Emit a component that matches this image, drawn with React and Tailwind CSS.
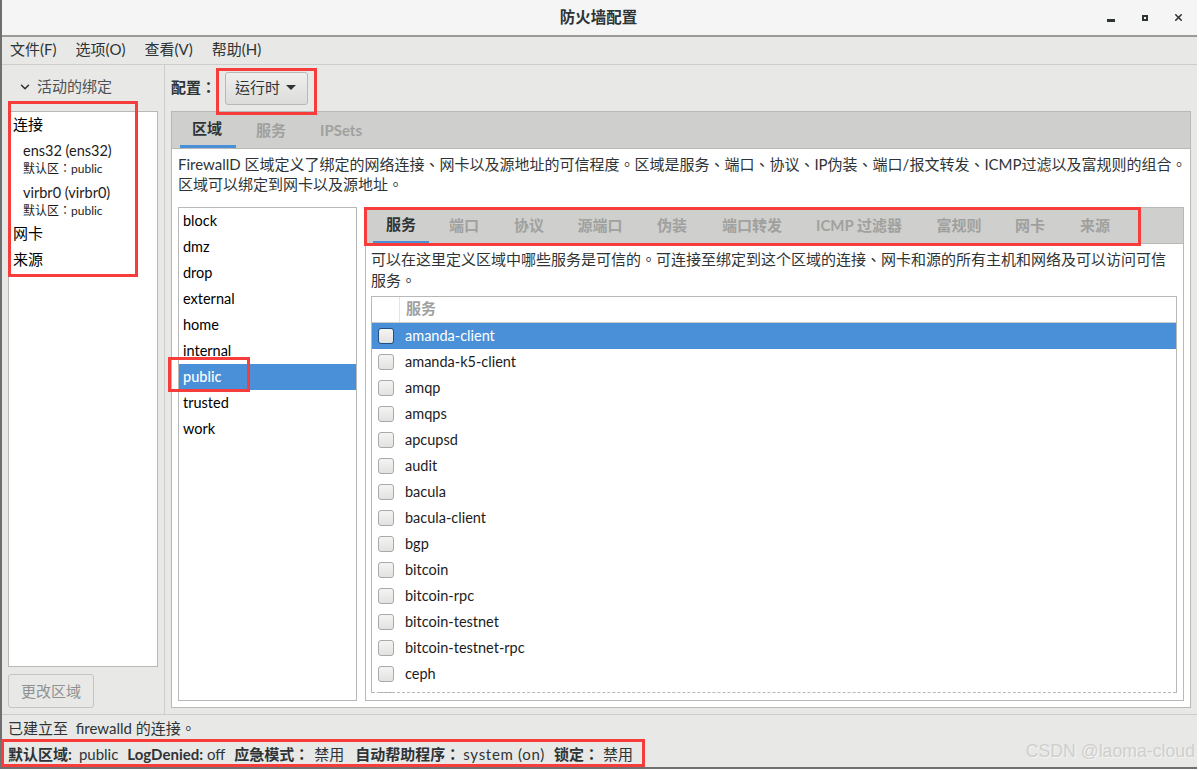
import React from "react";
import { ChevronDown, X } from "lucide-react";

const font = "font-['Lato','Noto_Sans_CJK_TC',sans-serif]";
const zones = ["block", "dmz", "drop", "external", "home", "internal", "public", "trusted", "work"];
const subTabs = [
  ["服务", "w-[56px]"],
  ["端口", "w-[70px]"],
  ["协议", "w-[60px]"],
  ["源端口", "w-[82px]"],
  ["伪装", "w-[62px]"],
  ["端口转发", "w-[98px]"],
  ["ICMP 过滤器", "w-[116px]"],
  ["富规则", "w-[84px]"],
  ["网卡", "w-[58px]"],
  ["来源", "w-[72px]"],
];
const services = [
  "amanda-client",
  "amanda-k5-client",
  "amqp",
  "amqps",
  "apcupsd",
  "audit",
  "bacula",
  "bacula-client",
  "bgp",
  "bitcoin",
  "bitcoin-rpc",
  "bitcoin-testnet",
  "bitcoin-testnet-rpc",
  "ceph",
  "",
];

const RedBox = ({ className }) => (
  <div className={`absolute border-[3px] border-[#f73c3c] pointer-events-none ${className}`} />
);

const App = () => {
  return (
    <div className={`relative w-[1199px] h-[770px] overflow-hidden bg-white text-[15px] text-[#2e3436] ${font}`}>
      <div className="w-[1197px] h-[769px] flex flex-col bg-[#e8e8e7] border-l-2 border-b-2 border-[#6f6f6f]">
        {/* title bar */}
        <div className="relative h-[37px] shrink-0 flex items-center justify-center pr-[2px] bg-[#f5f5f5] border-b-2 border-[#9a9a97] font-bold text-[15.5px] text-[#2e3436]">
          防火墙配置
          <div className="absolute top-0 right-0 h-full">
            <span className="absolute right-[82px] top-[19px] w-[8px] h-[3px] bg-[#2e3436]" />
            <span className="absolute right-[49px] top-[15px] w-[6px] h-[6px] border-2 border-[#2e3436]" />
            <X size={11} strokeWidth={3.4} className="absolute right-[13px] top-[12px]" />
          </div>
        </div>

        {/* menu */}
        <div className="h-[28px] shrink-0 flex items-center gap-[19px] pl-[8px] pb-[2px] border-b border-[#cdcdcb]">
          <span>文件(F)</span>
          <span>选项(O)</span>
          <span>查看(V)</span>
          <span>帮助(H)</span>
        </div>

        <div className="flex-1 flex min-h-0">
          {/* left panel */}
          <div className="w-[163px] shrink-0 flex flex-col border-r border-[#cdcdcb] pl-[6px] pr-[6px] pb-[6px]">
            <div className="h-[46px] shrink-0 flex items-center pl-[10px] pb-[3px] gap-[5px] text-[#4d5254]">
              <ChevronDown size={14} strokeWidth={2.6} className="text-[#2e3436]" />
              <span>活动的绑定</span>
            </div>
            <div className="flex-1 bg-white border border-[#b8b8b6] text-black pl-[4px]">
              <div className="h-[24px] flex items-center">连接</div>
              <div className="pl-[10px] text-[#1c1c1c]">
                <div className="h-[24px] flex items-center mt-[3px] text-[14.5px]">ens32 (ens32)</div>
                <div className="h-[12px] flex items-center text-[12px]">默认区：public</div>
                <div className="h-[24px] flex items-center mt-[6px] text-[14.5px]">virbr0 (virbr0)</div>
                <div className="h-[12px] flex items-center text-[12px]">默认区：public</div>
              </div>
              <div className="h-[26px] flex items-center mt-[3px]">网卡</div>
              <div className="h-[26px] flex items-center">来源</div>
            </div>
            <button className="mt-[7px] w-[86px] h-[34px] shrink-0 rounded-[3px] border border-[#c4c4c2] bg-[#e8e8e7] text-[#8f9292]">
              更改区域
            </button>
          </div>

          {/* right panel */}
          <div className="flex-1 min-w-0 flex flex-col pl-[6px] pr-[6px] pb-[6px]">
            <div className="h-[46px] shrink-0 flex items-center gap-[9px]">
              <span className="font-bold pb-[2px]">配置：</span>
              <button className="w-[83px] h-[33px] flex items-center justify-center gap-[6px] pr-[2px] pb-[1px] rounded-[3px] border border-[#b8b8b6] bg-gradient-to-b from-[#efefee] to-[#dcdcda]">
                运行时
                <span className="w-0 h-0 border-x-[5px] border-x-transparent border-t-[5px] border-t-[#2e3436]" />
              </button>
            </div>

            <div className="flex-1 min-h-0 flex flex-col bg-white border border-[#b8b8b6]">
              {/* main tabs */}
              <div className="h-[37px] shrink-0 flex bg-[#cfcfcd] border-b border-[#b8b8b6] pl-[8px] font-bold text-[#a0a19f]">
                <div className="w-[56px] h-full flex items-center justify-center pr-[2px] text-[#2e3436] border-b-[3px] border-[#4a90d9]">区域</div>
                <div className="w-[70px] h-full flex items-center justify-center">服务</div>
                <div className="w-[70px] h-full flex items-center justify-center">IPSets</div>
              </div>
              <div className="pt-[5px] pl-[6px] leading-[20px] h-[58px] shrink-0 whitespace-nowrap">
                <div>FirewallD 区域定义了绑定的网络连接、网卡以及源地址的可信程度。区域是服务、端口、协议、IP伪装、端口/报文转发、ICMP过滤以及富规则的组合。</div>
                <div>区域可以绑定到网卡以及源地址。</div>
              </div>

              <div className="flex-1 min-h-0 flex gap-[7px] pl-[6px] pr-[6px] pb-[6px]">
                {/* zones */}
                <div className="w-[179px] mr-[1px] shrink-0 bg-white border border-[#b8b8b6] text-black text-[14.5px]">
                  {zones.map((z) => (
                    <div
                      key={z}
                      className={`h-[26px] flex items-center pl-[4px] ${z === "public" ? "bg-[#4a90d9] text-white font-medium" : ""}`}
                    >
                      {z}
                    </div>
                  ))}
                </div>

                {/* zone detail */}
                <div className="flex-1 min-w-0 flex flex-col border border-[#b8b8b6]">
                  <div className="h-[36px] shrink-0 flex bg-[#cfcfcd] border-b border-[#b8b8b6] pl-[7px] font-bold text-[#a0a19f]">
                    {subTabs.map(([t, w], i) => (
                      <div
                        key={t}
                        className={`${w} shrink-0 h-full flex items-center justify-center whitespace-nowrap ${i === 0 ? "text-[#2e3436] border-b-2 border-[#4a90d9]" : ""}`}
                      >
                        {t}
                      </div>
                    ))}
                  </div>
                  <div className="pt-[5px] pl-[5px] h-[52px] shrink-0 leading-[21px]">
                    <div className="whitespace-nowrap">可以在这里定义区域中哪些服务是可信的。可连接至绑定到这个区域的连接、网卡和源的所有主机和网络及可以访问可信</div>
                    <div>服务。</div>
                  </div>
                  <div className="flex-1 min-h-0 ml-[5px] mr-[6px] mb-[7px] border-x border-t border-[#b8b8b6] bg-white overflow-hidden">
                    <div className="h-[26px] flex items-center border-b border-[#cdcdcb] font-bold text-[#a0a19f]">
                      <div className="w-[28px] h-full border-r border-[#e4e4e2]" />
                      <span className="pl-[6px] pb-[2px]">服务</span>
                    </div>
                    <div className="relative h-[370px] overflow-hidden text-[14.5px]">
                      {services.map((s, i) => (
                        <div
                          key={i}
                          className={`h-[26px] flex items-center gap-[11px] pl-[6px] ${i === 0 ? "bg-[#4a90d9] text-white" : "text-[#1c1c1c]"}`}
                        >
                          <span className={`w-[16px] h-[16px] shrink-0 rounded-[3px] border bg-gradient-to-b from-[#f4f4f3] to-[#e2e2e0] ${i === 0 ? "border-[#1f4f82]" : "border-[#a9a9a7]"}`} />
                          {s}
                        </div>
                      ))}
                      <div className="absolute left-0 right-0 bottom-0 border-t border-dashed border-[#b8b8b6]" />
                    </div>
                  </div>
                </div>
              </div>
            </div>
          </div>
        </div>

        {/* status */}
        <div className="h-[53px] shrink-0 border-t border-[#cdcdcb] pl-[6px] text-[#2e3436]">
          <div className="h-[26px] flex items-center">已建立至&nbsp;&nbsp;firewalld 的连接。</div>
          <div className="h-[26px] flex items-center whitespace-nowrap">
            <span><b>默认区域:</b><span className="ml-[7px]">public</span></span>
            <span className="ml-[9px]"><b>LogDenied:</b> off</span>
            <span className="ml-[9px]"><b>应急模式：</b><span className="ml-[5px]">禁用</span></span>
            <span className="ml-[11px]"><b>自动帮助程序：</b><span className="ml-[3px] tracking-[0.7px]">system (on)</span></span>
            <span className="ml-[9px]"><b>锁定：</b><span className="ml-[4px]">禁用</span></span>
          </div>
        </div>
      </div>

      {/* annotations */}
      <RedBox className="left-[8px] top-[101px] w-[130px] h-[176px]" />
      <RedBox className="left-[216px] top-[68px] w-[101px] h-[47px]" />
      <RedBox className="left-[168px] top-[357px] w-[82px] h-[35px]" />
      <RedBox className="left-[364px] top-[207px] w-[777px] h-[39px]" />
      <RedBox className="left-[1px] top-[739px] w-[644px] h-[28px]" />

      <div className="absolute right-[4px] bottom-[5px] text-[17.7px] font-['Liberation_Sans',sans-serif] text-[#cfcfcd] [text-shadow:1px_1px_0_#f4f4f4]">
        CSDN @laoma-cloud
      </div>
    </div>
  );
};
export default App;
